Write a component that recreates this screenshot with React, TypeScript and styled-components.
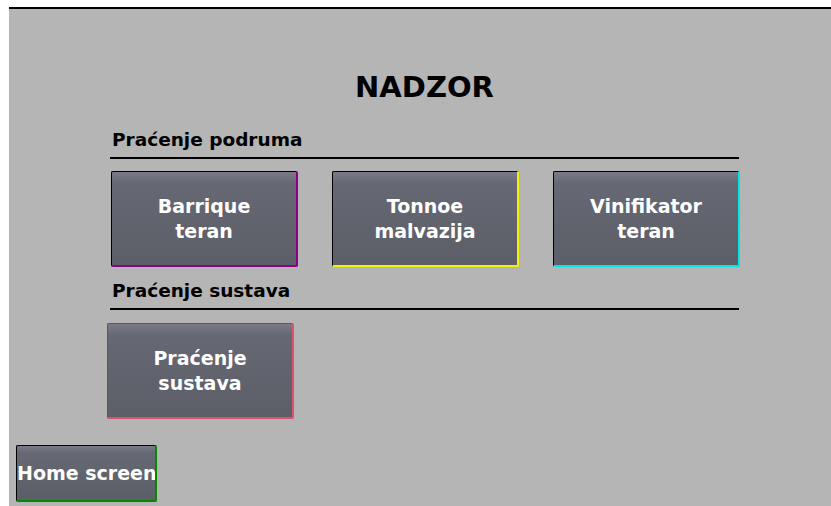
import React from 'react';
import styled, { createGlobalStyle } from 'styled-components';

const GlobalStyle = createGlobalStyle`
  html, body {
    margin: 0;
    padding: 0;
    background: #ffffff;
  }
  body {
    font-family: 'DejaVu Sans', Verdana, sans-serif;
  }
`;

const groups = [
  {
    title: 'Praćenje podruma',
    buttons: [
      { label: ['Barrique', 'teran'], edge: '#8b008b', lead: '#000000' },
      { label: ['Tonnoe', 'malvazija'], edge: '#f2f200', lead: '#000000' },
      { label: ['Vinifikator', 'teran'], edge: '#00e8e8', lead: '#000000' },
    ],
  },
  {
    title: 'Praćenje sustava',
    buttons: [{ label: ['Praćenje', 'sustava'], edge: '#d9536d', lead: '#4c5b78' }],
  },
];

export default function App() {
  return (
    <>
      <GlobalStyle />
      <Screen>
        <Content>
          <Title>NADZOR</Title>
          {groups.map((g, gi) => (
            <Section key={g.title} $first={gi === 0}>
              <SectionTitle>{g.title}</SectionTitle>
              <Divider />
              <ButtonGrid $shift={gi === 0 ? 1 : -3} $gap={gi === 0 ? 12 : 13}>
                {g.buttons.map((b) => (
                  <NavButton key={b.label.join(' ')} $edge={b.edge} $lead={b.lead}>
                    {b.label[0]}
                    <br />
                    {b.label[1]}
                  </NavButton>
                ))}
              </ButtonGrid>
            </Section>
          ))}
        </Content>
        <HomeButton>Home screen</HomeButton>
      </Screen>
    </>
  );
}

const Screen = styled.div`
  margin: 7px 0 0 9px;
  height: 499px;
  box-sizing: border-box;
  border-top: 2px solid #000000;
  background-color: #b5b5b5;
  display: flex;
  flex-direction: column;
  overflow: hidden;
`;

const Content = styled.div`
  width: 629px;
  margin-left: 101px;
  padding-top: 62px;
  display: flex;
  flex-direction: column;
`;

const Title = styled.h1`
  margin: 0;
  text-align: center;
  font-size: 29px;
  line-height: 32px;
  font-weight: bold;
  color: #000000;
`;

const Section = styled.div<{ $first: boolean }>`
  display: flex;
  flex-direction: column;
  margin-top: ${(p) => (p.$first ? '27px' : '14px')};
`;

const SectionTitle = styled.div`
  padding-left: 2px;
  font-size: 18.5px;
  line-height: 20px;
  font-weight: bold;
  color: #000000;
`;

const Divider = styled.div`
  margin-top: 7px;
  height: 2px;
  background: #000000;
`;

const ButtonGrid = styled.div<{ $shift: number; $gap: number }>`
  display: grid;
  grid-template-columns: repeat(3, 187px);
  column-gap: 34px;
  margin-top: ${(p) => p.$gap}px;
  margin-left: ${(p) => p.$shift}px;
`;

const NavButton = styled.button<{ $edge: string; $lead: string }>`
  height: 96px;
  box-sizing: border-box;
  border-style: solid;
  border-width: 1px 2px 2px 1px;
  border-color: ${(p) => `${p.$lead} ${p.$edge} ${p.$edge} ${p.$lead}`};
  border-radius: 2px;
  background: linear-gradient(to bottom, #7a7b86 0%, #666873 12%, #60626c 60%, #5c5e68 100%);
  color: #ffffff;
  font-family: 'DejaVu Sans', Verdana, sans-serif;
  font-size: 19px;
  line-height: 25px;
  font-weight: bold;
  text-align: center;
  padding: 0;
  cursor: pointer;
`;

const HomeButton = styled.button`
  margin: 26px 0 0 7px;
  width: 141px;
  height: 57px;
  box-sizing: border-box;
  border-style: solid;
  border-width: 1px 2px 2px 1px;
  border-color: #000000 #008a00 #008a00 #000000;
  border-radius: 2px;
  background: linear-gradient(to bottom, #7a7b86 0%, #666873 12%, #60626c 60%, #5c5e68 100%);
  color: #ffffff;
  font-family: 'DejaVu Sans', Verdana, sans-serif;
  font-size: 19px;
  font-weight: bold;
  white-space: nowrap;
  padding: 0;
  text-align: left;
  overflow: hidden;
  cursor: pointer;
`;
